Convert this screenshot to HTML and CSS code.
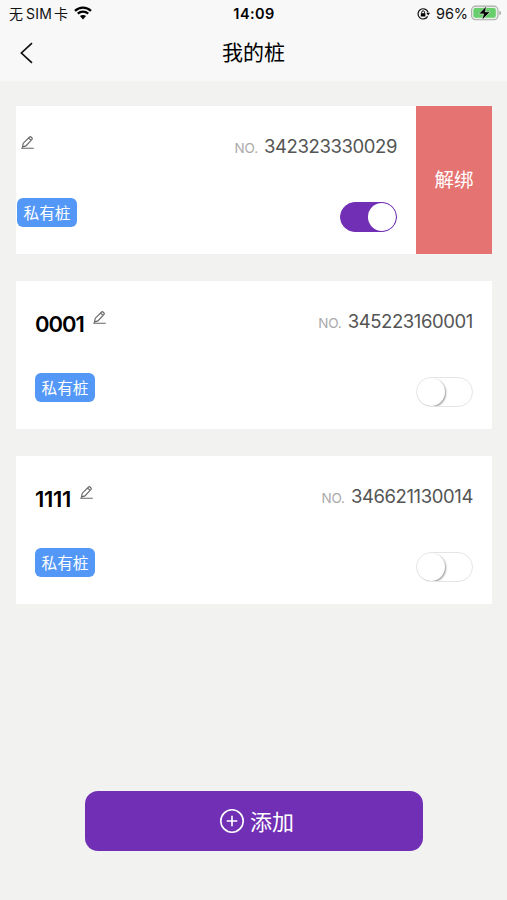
FILE: index.html
```html
<!DOCTYPE html>
<html lang="zh-CN">
<head>
<meta charset="utf-8">
<title>我的桩</title>
<link rel="stylesheet" href="styles.css">
</head>
<body>
<svg class="defs" width="0" height="0">
  <symbol id="pencil" viewBox="0 0 13 13">
    <path d="M.2 12.2h12.6M1.5 10.9l.8-3.7L8.6 1q.7-.6 1.4 0l1 1q.6.7 0 1.4L4.9 9.9zM7.8 2.1l2.2 2.2" fill="none" stroke="currentColor" stroke-width="1.15"/>
  </symbol>
</svg>
<header class="top">
  <div class="status">
    <div class="status-left">
      <span class="carrier">无<span class="sim">SIM</span>卡</span>
      <svg class="wifi" width="18" height="14" viewBox="0 0 18 14">
        <path d="M1 4.8C5.5.5 12.5.5 17 4.8M3.8 7.7c3-2.8 7.4-2.8 10.4 0" fill="none" stroke="#000" stroke-width="2.3"/>
        <path d="M5.9 10.1c1.8-1.5 4.4-1.5 6.2 0L9 13.4z"/>
      </svg>
    </div>
    <time class="clock">14:09</time>
    <div class="status-right">
      <svg width="13" height="12" viewBox="0 0 13 12">
        <path d="M11 4.3A5.1 5.1 0 1 0 10.6 8.4" fill="none" stroke="#111" stroke-width="1.2"/>
        <path d="M9.3 4.7H13l-1.8 2.9z"/>
        <path d="M3.8 5.2h4.6v3.3H3.8z"/>
        <path d="M4.7 5.3V4.2a1.4 1.4 0 0 1 2.8 0v1.1" fill="none" stroke="#111"/>
      </svg>
      <span class="percent">96%</span>
      <svg width="31" height="16" viewBox="0 0 31 16">
        <rect x=".6" y="1.1" width="26.4" height="13.6" rx="4" fill="#e9eee9" stroke="#a8aba8" stroke-width="1.1"/>
        <rect x="2.4" y="3" width="22.4" height="9.8" rx="2" fill="#66cf6b"/>
        <path d="M28.3 5.7v4.6q1.8-.6 1.8-2.3t-1.8-2.3z" fill="#a8aba8"/>
        <path d="M15.6.8L7.8 8.9h4.8L10.9 15.2l8.3-8.4h-5z" stroke="#e9f6e9" stroke-width=".6"/>
      </svg>
    </div>
  </div>
  <nav class="nav">
    <svg width="14" height="22" viewBox="0 0 14 22"><path d="M12 1.2L1.4 11 12 20.8" fill="none" stroke="#111" stroke-width="1.7"/></svg>
    <h1>我的桩</h1>
  </nav>
</header>
<main class="list">
  <article class="card swiped">
    <div class="body">
      <div class="row head">
        <svg class="edit"><use href="#pencil"/></svg>
        <div class="serial"><small>NO.</small><span class="digits">342323330029</span></div>
      </div>
      <div class="row foot"><span class="tag">私有桩</span><span class="switch on"></span></div>
    </div>
    <button class="unbind">解绑</button>
  </article>
  <article class="card">
    <div class="body">
      <div class="row head">
        <h2>0001</h2><svg class="edit"><use href="#pencil"/></svg>
        <div class="serial"><small>NO.</small><span class="digits">345223160001</span></div>
      </div>
      <div class="row foot"><span class="tag">私有桩</span><span class="switch"></span></div>
    </div>
  </article>
  <article class="card">
    <div class="body">
      <div class="row head">
        <h2 class="ones">1111</h2><svg class="edit"><use href="#pencil"/></svg>
        <div class="serial"><small>NO.</small><span class="digits">346621130014</span></div>
      </div>
      <div class="row foot"><span class="tag">私有桩</span><span class="switch"></span></div>
    </div>
  </article>
</main>
<button class="add">
  <svg width="26" height="26" viewBox="0 0 26 26"><circle cx="13" cy="13" r="11.2"/><path d="M13 7.7v10.6M7.7 13h10.6"/></svg>
  <span>添加</span>
</button>
</body>
</html>
```
FILE: styles.css
```css
* { box-sizing: border-box; }
body {
  margin: 0;
  height: 900px;
  display: flex;
  flex-direction: column;
  overflow: hidden;
  background: #f2f2f0;
  color: #000;
  font-family: Inter, "Noto Sans CJK SC", sans-serif;
}
h1, h2 { margin: 0; }
button { border: 0; padding: 0; font: inherit; color: #fff; }
.defs { display: none; }
.top { height: 81px; background: #f8f8f8; }
.status {
  height: 27px;
  display: grid;
  grid-template-columns: 1fr auto 1fr;
  align-items: center;
  padding: 0 6px 0 9px;
}
.status-left, .status-right { display: flex; align-items: center; }
.status-right { justify-content: flex-end; }
.carrier { font-size: 14px; line-height: 20px; color: #111; }
.sim { margin: 0 2px 0 3px; letter-spacing: .2px; }
.wifi { margin: 0 0 2px 6px; }
.clock { font-size: 14.5px; font-weight: 600; letter-spacing: .4px; margin-right: 2px; }
.percent { font-size: 14.5px; margin: 0 3px 0 7px; color: #111; letter-spacing: -.1px; }
.status-right svg:first-child { margin-right: -1px; }
.status-right svg:last-child { margin: 0 -1px 2px 0; }
.nav {
  height: 52px;
  display: grid;
  grid-template-columns: 1fr auto 1fr;
  align-items: center;
  padding: 0 20px;
}
h1 { font-size: 21px; line-height: 30px; font-weight: 400; }
.list { display: grid; gap: 27px; padding: 25px 15px 0 16px; }
.card { height: 148px; display: flex; background: #fff; }
.body { flex: 1; padding: 25px 19px 0; }
.swiped .body { padding-left: 1px; }
.row { display: flex; align-items: flex-start; }
.head { height: 67px; }
h2 {
  font-size: 22px;
  line-height: 28px;
  font-weight: 600;
  padding-top: 4px;
  letter-spacing: -1px;
}
.ones { letter-spacing: -.3px; }
.edit { width: 13px; height: 13px; margin: 4.5px 0 0 9px; color: #666; }
.swiped .edit { margin-left: 4px; }
.serial {
  margin-left: auto;
  display: flex;
  align-items: baseline;
  line-height: 30px;
  color: #555;
}
.serial small { font-size: 13.5px; color: #aaa; margin-right: 6px; letter-spacing: -.1px; }
.digits { font-size: 18.5px; letter-spacing: -.4px; }
.foot { justify-content: space-between; }
.tag {
  width: 60px;
  height: 29px;
  border-radius: 6px;
  background: #5498f7;
  color: #fff;
  font-size: 15.7px;
  line-height: 31px;
  text-align: center;
}
.switch {
  width: 57px;
  height: 30px;
  margin-top: 4px;
  display: flex;
  border: 1.5px solid #e5e5e5;
  border-radius: 15px;
  background: #fff;
  overflow: hidden;
}
.switch::before {
  content: "";
  width: 28px;
  height: 28px;
  border-radius: 50%;
  background: #fff;
  box-shadow: 1px 1px 2px rgba(0, 0, 0, .4);
}
.on { justify-content: flex-end; background: #712fb5; border-color: #712fb5; }
.on::before { box-shadow: none; }
.unbind { width: 76px; padding-bottom: 3px; background: #e57371; font-size: 19.5px; }
.add {
  width: 338px;
  height: 60px;
  margin: 187px auto 0 85px;
  padding-left: 5px;
  display: flex;
  align-items: center;
  justify-content: center;
  gap: 5px;
  border-radius: 13px;
  background: #712fb5;
  font-size: 22px;
}
.add span { margin-top: -3px; }
.add svg { fill: none; stroke: #fff; stroke-width: 1.6; }
```
